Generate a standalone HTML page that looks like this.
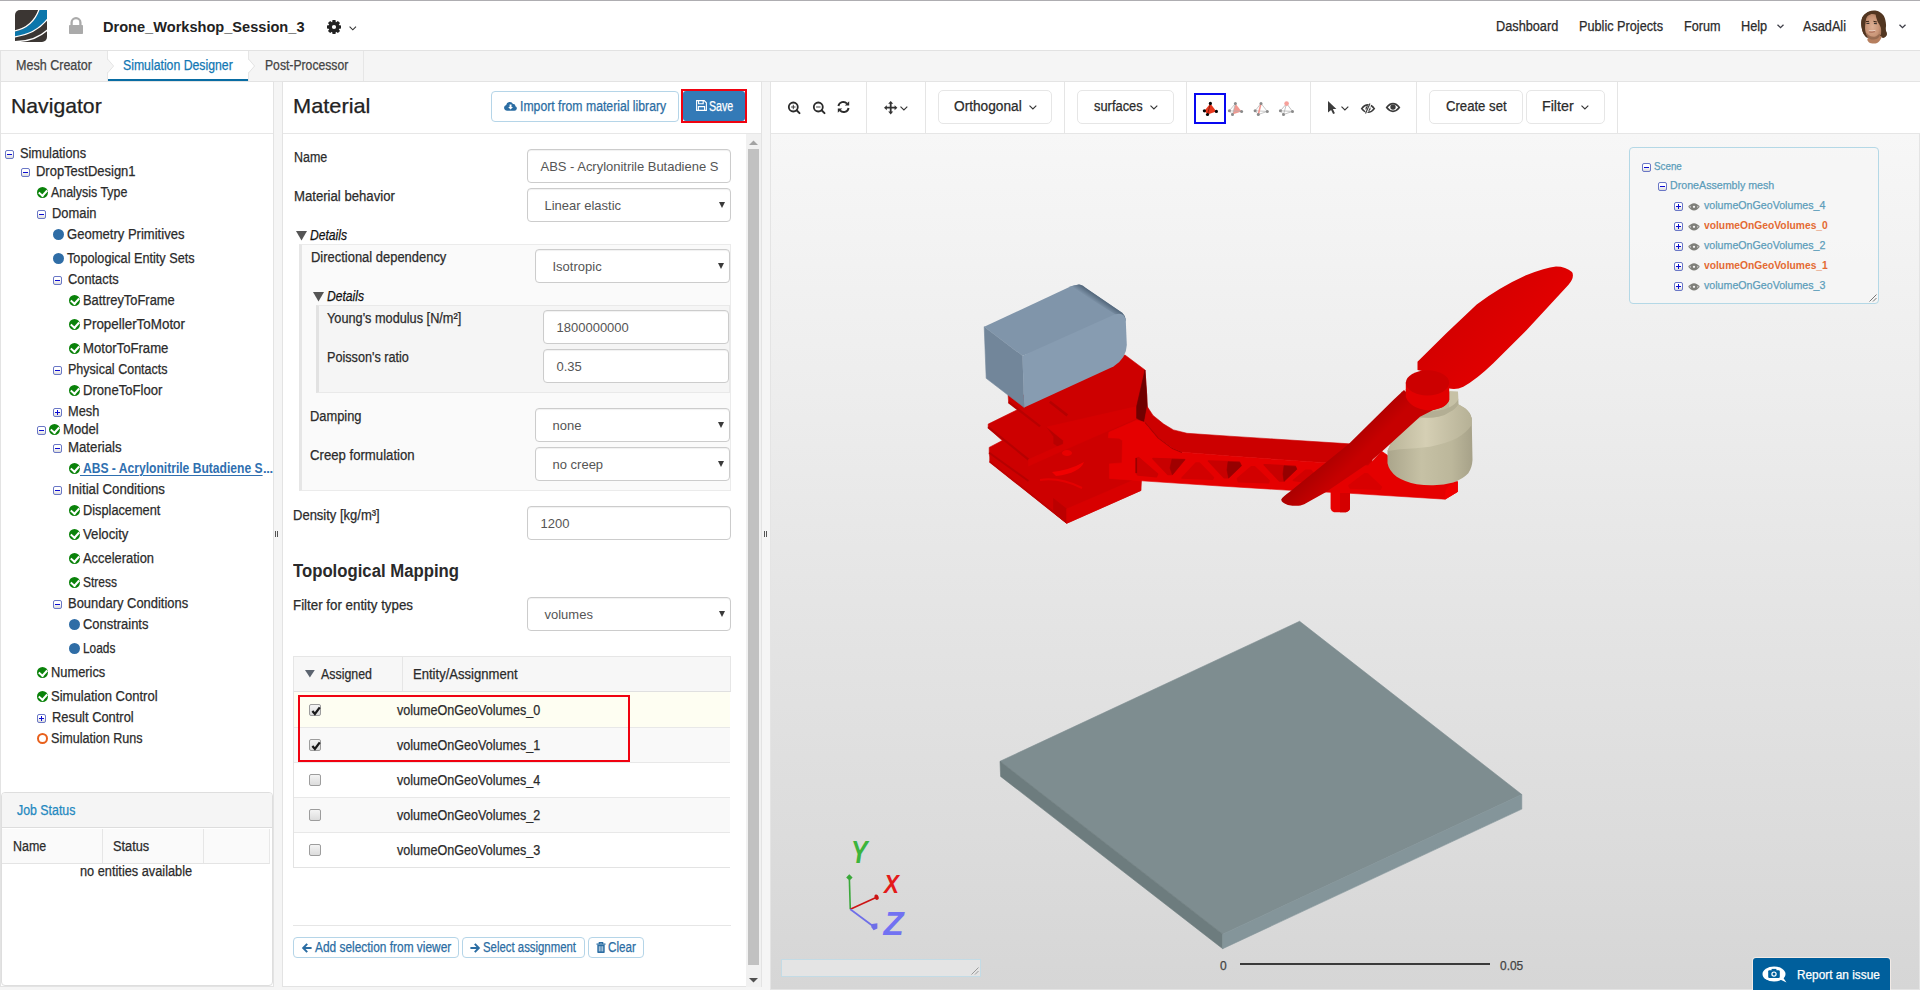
<!DOCTYPE html>
<html><head><meta charset="utf-8"><title>Drone_Workshop_Session_3</title>
<style>
*{box-sizing:border-box}
html,body{margin:0;padding:0}
body{width:1920px;height:990px;overflow:hidden;position:relative;background:#f5f5f5;font:14px/18px "Liberation Sans",sans-serif;color:#2b2b2b}
.a{position:absolute}
.t{position:absolute;white-space:nowrap;transform-origin:0 0;-webkit-text-stroke:0.25px}
svg{position:absolute;overflow:visible}
.ex{position:absolute;width:9px;height:9px;border:1px solid #6a77c6;border-radius:2px;background:linear-gradient(#fff 35%,#dcdcdc)}
.ex i{position:absolute;left:1px;top:2.9px;width:5px;height:1.25px;background:#0c0cd2}
.ex b{position:absolute;left:2.9px;top:1px;width:1.25px;height:5px;background:#0c0cd2}
.ok{position:absolute;width:11px;height:11px;border-radius:50%;background:#0a820a}
.ok:after{content:"";position:absolute;left:3.4px;top:1.2px;width:3.6px;height:6.2px;border:solid #fff;border-width:0 2.1px 2.1px 0;transform:rotate(42deg)}
.bl{position:absolute;width:11px;height:11px;border-radius:50%;background:#2f6da6}
.oc{position:absolute;width:11px;height:11px;border-radius:50%;border:2px solid #e8601c;background:#fff}
.inp{position:absolute;font-size:13px;height:34px;border:1px solid #ccc;border-radius:4px;background:#fff;color:#555;box-shadow:inset 0 1px 1px rgba(0,0,0,.06)}
.inp span{position:absolute;top:8px;line-height:18px;white-space:nowrap}
.inp u{position:absolute;right:5px;top:13px;width:0;height:0;border-left:3.5px solid transparent;border-right:3.5px solid transparent;border-top:6px solid #3a3a3a}
.btn{position:absolute;border:1px solid #b5d5e8;border-radius:4px;background:#fff;color:#2b6da3}
.tbtn{position:absolute;border:1px solid #e6e6e6;border-radius:5px;background:#fff;height:34px}
.vsep{position:absolute;top:82px;width:1px;height:51px;background:#e5e5e5}
.cb{position:absolute;width:12px;height:12px;border:1px solid #9d9d9d;border-radius:2px;background:linear-gradient(#f4f4f4,#dcdcdc)}
</style></head>
<body>
<!-- HEADER -->
<div class="a" style="left:0;top:0;width:1920px;height:51px;background:#fff;border-top:1px solid #aeadb1;border-bottom:1px solid #e2e2e2"></div>
<svg style="left:15px;top:10px" width="32" height="32" viewBox="0 0 32 32">
  <defs><clipPath id="lg"><path d="M5 0H32V27a5 5 0 0 1-5 5H0V5a5 5 0 0 1 5-5z"></path></clipPath></defs>
  <g clip-path="url(#lg)">
    <rect width="32" height="32" fill="#3b3633"></rect>
    <path d="M-1 21.8Q18.3 18 24.9 -1H33V8.2Q20.5 24.2 -1 26.6z" fill="#0b76ab"></path>
    <path d="M-1 21.1Q18 17.3 24.2 -1" fill="none" stroke="#fff" stroke-width="1.3"></path>
    <path d="M-1 27Q20.5 24.6 33 8.6" fill="none" stroke="#fff" stroke-width="1.3"></path>
    <path d="M-1 31.6Q20 31.8 33 19.4" fill="none" stroke="#fff" stroke-width="1.3"></path>
  </g>
</svg>
<svg style="left:69px;top:17px" width="14" height="17" viewBox="0 0 14 17">
  <path d="M2.6 9V5.6a4.4 4.4 0 0 1 8.8 0V9" fill="none" stroke="#aaa" stroke-width="2.3"></path>
  <rect x="0" y="8" width="14" height="9" rx="0.8" fill="#aaa"></rect>
</svg>
<div class="t" style="left: 102.5px; top: 17px; font-weight: bold; -webkit-text-stroke: 0px; font-size: 15px; line-height: 20px; color: rgb(34, 34, 34); transform: scaleX(0.972);">Drone_Workshop_Session_3</div>
<svg style="left:327px;top:20px" width="14" height="14" viewBox="-7 -7 14 14">
  <g fill="#222">
    <path id="gt" d="M-1.5 -7H1.5L1.9 -4.4H-1.9z"></path>
    <use href="#gt" transform="rotate(45)"></use><use href="#gt" transform="rotate(90)"></use><use href="#gt" transform="rotate(135)"></use>
    <use href="#gt" transform="rotate(180)"></use><use href="#gt" transform="rotate(225)"></use><use href="#gt" transform="rotate(270)"></use><use href="#gt" transform="rotate(315)"></use>
  </g>
  <circle r="3.7" fill="none" stroke="#222" stroke-width="3.2"></circle>
</svg>
<svg style="left:349px;top:26px" width="8" height="5" viewBox="0 0 8 5"><path d="M0.6 0.6L3.8 3.8L7 0.6" fill="none" stroke="#333" stroke-width="1.1"></path></svg>

<div class="t" style="left: 1496px; top: 17px; transform: scaleX(0.909);">Dashboard</div>
<div class="t" style="left: 1579px; top: 17px; transform: scaleX(0.907);">Public Projects</div>
<div class="t" style="left: 1683.5px; top: 17px; transform: scaleX(0.902);">Forum</div>
<div class="t" style="left: 1741px; top: 17px; transform: scaleX(0.91);">Help</div>
<svg style="left:1776.5px;top:24px" width="7" height="5" viewBox="0 0 7 5"><path d="M0.5 0.7L3.5 3.7L6.5 0.7" fill="none" stroke="#3c3c46" stroke-width="1.25"></path></svg>
<div class="t" style="left: 1803px; top: 17px; transform: scaleX(0.906);">AsadAli</div>
<svg style="left:1899px;top:24px" width="7" height="5" viewBox="0 0 7 5"><path d="M0.5 0.7L3.5 3.7L6.5 0.7" fill="none" stroke="#3c3c46" stroke-width="1.25"></path></svg>
<!-- avatar -->
<svg style="left:1859px;top:9px" width="30" height="36" viewBox="0 0 30 36"><defs><radialGradient id="fc" cx="45%" cy="50%" r="65%"><stop offset="0" stop-color="#ddb095"></stop><stop offset="0.6" stop-color="#c99577"></stop><stop offset="1" stop-color="#9a6a50"></stop></radialGradient></defs><path d="M9.61 28.64C11.81 27.49 20.27 25.24 22.31 25.48C24.34 25.72 22.52 28.67 21.82 30.09C21.12 31.51 19.72 33.32 18.09 34.02C16.46 34.72 13.52 34.59 12.03 34.31C10.54 34.04 9.52 33.31 9.12 32.37C8.72 31.42 7.41 29.79 9.61 28.64z" fill="#b67f5f"></path><path d="M3.79 23.06C3.31 21.44 2.49 18.45 2.33 16.27C2.17 14.09 2.29 11.75 2.82 9.97C3.34 8.19 4.27 6.86 5.48 5.61C6.69 4.36 8.51 3.14 10.09 2.45C11.67 1.76 13.32 1.48 14.94 1.48C16.56 1.48 18.25 1.68 19.79 2.45C21.32 3.22 23.06 4.67 24.15 6.09C25.24 7.50 25.84 9.24 26.33 10.94C26.81 12.64 27.00 14.57 27.06 16.27C27.12 17.97 26.55 19.66 26.67 21.12C26.79 22.58 27.80 23.93 27.79 25.0C27.77 26.07 27.19 26.90 26.58 27.52C25.97 28.14 24.88 28.83 24.15 28.73C23.42 28.63 23.75 27.08 22.21 26.94C20.68 26.80 17.28 27.63 14.94 27.91C12.60 28.19 9.77 28.96 8.15 28.64C6.53 28.32 5.97 26.90 5.24 25.97C4.51 25.04 4.28 24.68 3.79 23.06z" fill="#523621"></path><path d="M6.31 13.36C6.51 11.10 6.63 9.36 7.42 8.03C8.21 6.70 9.48 5.72 11.06 5.36C12.64 5.00 15.42 4.84 16.88 5.85C18.33 6.86 18.90 9.36 19.79 11.42C20.68 13.48 21.79 16.03 22.21 18.21C22.63 20.39 22.79 22.78 22.31 24.52C21.82 26.26 20.53 27.66 19.3 28.64C18.07 29.62 16.31 30.21 14.94 30.43C13.57 30.65 12.19 30.53 11.06 29.95C9.93 29.37 8.96 28.33 8.15 26.94C7.34 25.55 6.52 23.87 6.21 21.61C5.90 19.35 6.11 15.62 6.31 13.36z" fill="url(#fc)"></path><path d="M7.18 24.03C7.67 24.03 9.61 26.33 11.06 26.94C12.52 27.55 14.29 27.99 15.91 27.67C17.53 27.35 20.20 24.84 20.76 25.0C21.33 25.16 20.27 27.73 19.3 28.64C18.33 29.55 16.31 30.21 14.94 30.43C13.57 30.65 12.19 30.53 11.06 29.95C9.93 29.37 8.80 27.93 8.15 26.94C7.50 25.95 6.69 24.03 7.18 24.03z" fill="#8d6349" opacity="0.75"></path><path d="M16.88 5.7C17.32 5.09 19.95 7.48 21.24 8.76C22.53 10.04 23.75 11.46 24.64 13.36C25.53 15.26 26.05 18.21 26.58 20.15C27.10 22.09 27.83 23.72 27.79 25.0C27.75 26.28 26.98 27.19 26.33 27.81C25.68 28.43 24.58 28.88 23.91 28.73C23.24 28.59 22.59 28.37 22.31 26.94C22.03 25.51 22.51 22.01 22.21 20.15C21.91 18.29 21.12 17.08 20.52 15.79C19.91 14.50 19.19 14.07 18.58 12.39C17.97 10.71 16.44 6.31 16.88 5.7z" fill="#523621"></path><path d="M2.82 9.97C3.34 8.19 4.27 6.82 5.48 5.61C6.69 4.40 8.51 3.19 10.09 2.7C11.67 2.22 14.62 2.30 14.94 2.7C15.26 3.10 13.16 4.31 12.03 5.12C10.90 5.93 9.08 6.34 8.15 7.55C7.22 8.76 6.81 10.61 6.45 12.39C6.09 14.17 6.17 16.19 5.97 18.21C5.77 20.23 5.60 23.71 5.24 24.52C4.88 25.33 4.28 24.43 3.79 23.06C3.31 21.68 2.49 18.45 2.33 16.27C2.17 14.09 2.29 11.75 2.82 9.97z" fill="#523621"></path><path d="M6.94 12.64L10.09 12.3" stroke="#3a2515" stroke-width="1"></path><path d="M14.45 12.3L17.85 12.98" stroke="#3a2515" stroke-width="1"></path><path d="M7.42 14.48L10.33 14.33" stroke="#3d3530" stroke-width="1.2"></path><path d="M14.94 14.33L17.85 14.58" stroke="#3d3530" stroke-width="1.2"></path><path d="M9.85 21.7Q13.0 22.09 16.39 21.36" stroke="#ecd3c6" stroke-width="0.9" fill="none"></path><path d="M10.09 22.96Q13.0 23.55 15.91 22.67" stroke="#a2604c" stroke-width="0.9" fill="none"></path></svg>

<!-- TAB BAR -->
<div class="a" style="left:0;top:51px;width:1920px;height:31px;background:#f5f5f5;border-bottom:1px solid #e5e5e5"></div>
<div class="a" style="left:0;top:51px;width:1px;height:30px;background:#e2e2e2"></div>
<div class="a" style="left:108px;top:51px;width:140px;height:30px;background:#fff;border-bottom:2px solid #086ca3"></div>
<div class="a" style="left:107px;top:51px;width:1px;height:30px;background:#e6e6e6"></div>
<div class="a" style="left:248px;top:51px;width:1px;height:30px;background:#e6e6e6"></div>
<div class="a" style="left:363px;top:51px;width:1px;height:30px;background:#e6e6e6"></div>
<svg style="left:107px;top:58px" width="8" height="16" viewBox="0 0 8 16"><path d="M0 1L6.3 8L0 15z" fill="#f5f5f5"></path><path d="M0.5 1L6.6 8L0.5 15" fill="none" stroke="#e4e4e4" stroke-width="1"></path></svg>
<svg style="left:248px;top:58px" width="8" height="16" viewBox="0 0 8 16"><path d="M0 1L6.3 8L0 15z" fill="#fff"></path><path d="M0.5 1L6.6 8L0.5 15" fill="none" stroke="#e4e4e4" stroke-width="1"></path></svg>
<div class="t" style="left: 16px; top: 56px; color: rgb(68, 68, 68); transform: scaleX(0.896);">Mesh Creator</div>
<div class="t" style="left: 123.3px; top: 56px; color: rgb(17, 119, 179); transform: scaleX(0.876);">Simulation Designer</div>
<div class="t" style="left: 264.5px; top: 56px; color: rgb(68, 68, 68); transform: scaleX(0.87);">Post-Processor</div>
<!-- NAVIGATOR PANEL -->
<div class="a" style="left:0px;top:81px;width:274px;height:906px;background:#fff;border:1px solid #e3e3e3"></div>
<div class="a" style="left:1px;top:133px;width:272px;height:1px;background:#e7e7e7"></div>
<div class="t" style="left: 11px; top: 93px; font-size: 21px; line-height: 26px; color: rgb(34, 34, 34); transform: scaleX(1.009);">Navigator</div>
<div class="ex" style="left:5px;top:150px"><i></i></div>
<div class="t" style="left: 19.7px; top: 144px; transform: scaleX(0.913);">Simulations</div>
<div class="ex" style="left:21px;top:168px"><i></i></div>
<div class="t" style="left: 35.7px; top: 162px; transform: scaleX(0.927);">DropTestDesign1</div>
<div class="ok" style="left:37px;top:187px"></div>
<div class="t" style="left: 51px; top: 183px; transform: scaleX(0.887);">Analysis Type</div>
<div class="ex" style="left:37px;top:210px"><i></i></div>
<div class="t" style="left: 51.7px; top: 204px; transform: scaleX(0.922);">Domain</div>
<div class="bl" style="left:53px;top:229px"></div>
<div class="t" style="left: 67px; top: 225px; transform: scaleX(0.932);">Geometry Primitives</div>
<div class="bl" style="left:53px;top:253px"></div>
<div class="t" style="left: 67px; top: 249px; transform: scaleX(0.906);">Topological Entity Sets</div>
<div class="ex" style="left:53px;top:276px"><i></i></div>
<div class="t" style="left: 67.7px; top: 270px; transform: scaleX(0.916);">Contacts</div>
<div class="ok" style="left:69px;top:295px"></div>
<div class="t" style="left: 83px; top: 291px; transform: scaleX(0.921);">BattreyToFrame</div>
<div class="ok" style="left:69px;top:319px"></div>
<div class="t" style="left: 83px; top: 315px; transform: scaleX(0.957);">PropellerToMotor</div>
<div class="ok" style="left:69px;top:343px"></div>
<div class="t" style="left: 83px; top: 339px; transform: scaleX(0.938);">MotorToFrame</div>
<div class="ex" style="left:53px;top:366px"><i></i></div>
<div class="t" style="left: 67.7px; top: 360px; transform: scaleX(0.895);">Physical Contacts</div>
<div class="ok" style="left:69px;top:385px"></div>
<div class="t" style="left: 83px; top: 381px; transform: scaleX(0.936);">DroneToFloor</div>
<div class="ex" style="left:53px;top:408px"><i></i><b></b></div>
<div class="t" style="left: 67.7px; top: 402px; transform: scaleX(0.914);">Mesh</div>
<div class="ex" style="left:37px;top:426px"><i></i></div>
<div class="ok" style="left:49px;top:424px"></div>
<div class="t" style="left: 63.2px; top: 420px; transform: scaleX(0.936);">Model</div>
<div class="ex" style="left:53px;top:444px"><i></i></div>
<div class="t" style="left: 67.7px; top: 438px; transform: scaleX(0.944);">Materials</div>
<div class="ok" style="left:69px;top:463px"></div>
<div class="a" style="left:80px;top:459px;width:183px;height:18px;overflow:hidden;font-weight:bold;color:#2f6fb0"><span class="t" style="left: 0px; top: 0px; -webkit-text-stroke: 0px; text-decoration: underline 1px; text-underline-offset: 2px; white-space: pre; transform: scaleX(0.864);"> ABS - Acrylonitrile Butadiene S</span></div>
<div class="t" style="left:263px;top:460px;font-size:13px;font-weight:bold;-webkit-text-stroke:0;color:#2f6fb0;letter-spacing:-0.3px">...</div>
<div class="ex" style="left:53px;top:486px"><i></i></div>
<div class="t" style="left: 67.7px; top: 480px; transform: scaleX(0.944);">Initial Conditions</div>
<div class="ok" style="left:69px;top:505px"></div>
<div class="t" style="left: 83px; top: 501px; transform: scaleX(0.912);">Displacement</div>
<div class="ok" style="left:69px;top:529px"></div>
<div class="t" style="left: 83px; top: 525px; transform: scaleX(0.941);">Velocity</div>
<div class="ok" style="left:69px;top:553px"></div>
<div class="t" style="left: 83px; top: 549px; transform: scaleX(0.922);">Acceleration</div>
<div class="ok" style="left:69px;top:577px"></div>
<div class="t" style="left: 83px; top: 573px; transform: scaleX(0.857);">Stress</div>
<div class="ex" style="left:53px;top:600px"><i></i></div>
<div class="t" style="left: 67.7px; top: 594px; transform: scaleX(0.925);">Boundary Conditions</div>
<div class="bl" style="left:69px;top:619px"></div>
<div class="t" style="left: 83px; top: 615px; transform: scaleX(0.924);">Constraints</div>
<div class="bl" style="left:69px;top:643px"></div>
<div class="t" style="left: 83px; top: 639px; transform: scaleX(0.849);">Loads</div>
<div class="ok" style="left:37px;top:667px"></div>
<div class="t" style="left: 51px; top: 663px; transform: scaleX(0.918);">Numerics</div>
<div class="ok" style="left:37px;top:691px"></div>
<div class="t" style="left: 51px; top: 687px; transform: scaleX(0.932);">Simulation Control</div>
<div class="ex" style="left:37px;top:714px"><i></i><b></b></div>
<div class="t" style="left: 51.7px; top: 708px; transform: scaleX(0.921);">Result Control</div>
<div class="oc" style="left:37px;top:733px"></div>
<div class="t" style="left: 51px; top: 729px; transform: scaleX(0.899);">Simulation Runs</div>
<!-- JOB STATUS -->
<div class="a" style="left:1px;top:792px;width:272px;height:194px;background:#fff;border:1px solid #dedede;border-radius:4px"></div>
<div class="a" style="left:2px;top:793px;width:270px;height:35px;background:#f5f5f5;border-bottom:1px solid #dddddd;border-radius:3px 3px 0 0"></div>
<div class="t" style="left: 17.4px; top: 801px; color: rgb(36, 136, 192); transform: scaleX(0.883);">Job Status</div>
<div class="a" style="left:2px;top:829px;width:268px;height:35px;background:#fafafa;border-bottom:1px solid #e4e4e4;border-right:1px solid #e8e8e8"></div>
<div class="a" style="left:102px;top:829px;width:1px;height:34px;background:#e6e6e6"></div>
<div class="a" style="left:203px;top:829px;width:1px;height:34px;background:#e6e6e6"></div>
<div class="t" style="left: 13.3px; top: 837px; transform: scaleX(0.889);">Name</div>
<div class="t" style="left: 113px; top: 837px; transform: scaleX(0.912);">Status</div>
<div class="t" style="left: 79.6px; top: 862px; transform: scaleX(0.912);">no entities available</div>
<div class="a" style="left:275px;top:531px;width:1px;height:6px;background:#555"></div><div class="a" style="left:277px;top:531px;width:1px;height:6px;background:#555"></div>
<!-- MATERIAL PANEL -->
<div class="a" style="left:282px;top:81px;width:480px;height:906px;background:#fff;border:1px solid #e3e3e3"></div>
<div class="a" style="left:283px;top:133px;width:478px;height:1px;background:#e7e7e7"></div>
<div class="t" style="left: 293.3px; top: 93px; font-size: 21px; line-height: 26px; color: rgb(34, 34, 34); transform: scaleX(1.037);">Material</div>
<!-- import button -->
<div class="btn" style="left:491px;top:91px;width:188px;height:31px"></div>
<svg style="left:504px;top:101px" width="13" height="10" viewBox="0 0 13 10"><path d="M3 9.8A2.9 2.9 0 0 1 2.2 4.1A3.6 3.6 0 0 1 9 2.9A2.2 2.2 0 0 1 11.4 5.2A2.4 2.4 0 0 1 10.5 9.8z" fill="#2b6da3"></path><path d="M5.6 3.6h1.9v2.3h1.5L6.55 8.4L4.1 5.9h1.5z" fill="#fff"></path></svg>
<div class="t" style="left: 520px; top: 97px; color: rgb(43, 109, 163); transform: scaleX(0.874);">Import from material library</div>
<!-- save button -->
<div class="a" style="left:681px;top:89px;width:66px;height:34px;border:2px solid #f00210"></div>
<div class="a" style="left:683px;top:91px;width:62px;height:30px;background:#337ab7;border-radius:3px"></div>
<svg style="left:696px;top:100px" width="11" height="11" viewBox="0 0 11 11"><path d="M0.6 0.6H8.2L10.4 2.8V10.4H0.6z" fill="none" stroke="#fff" stroke-width="1.1"></path><path d="M2.6 0.8V3.8H7.2V0.8M2.4 10.2V6.6H8.6V10.2" fill="none" stroke="#fff" stroke-width="1.1"></path></svg>
<div class="t" style="left: 709px; top: 97px; color: rgb(255, 255, 255); transform: scaleX(0.761);">Save</div>

<!-- scrollbar -->
<div class="a" style="left:746px;top:134px;width:15px;height:853px;background:#f1f1f1"></div>
<div class="a" style="left:748px;top:149px;width:11px;height:816px;background:#c1c1c1"></div>
<svg style="left:749px;top:140px" width="9" height="5" viewBox="0 0 9 5"><path d="M0 5L4.5 0.5L9 5z" fill="#a3a3a3"></path></svg>
<svg style="left:749px;top:978px" width="9" height="5" viewBox="0 0 9 5"><path d="M0 0L4.5 4.5L9 0z" fill="#505050"></path></svg>

<!-- form -->
<div class="t" style="left: 293.7px; top: 148px; transform: scaleX(0.891);">Name</div>
<div class="inp" style="left:527px;top:149px;width:204px"><span style="left: 12.5px; letter-spacing: -0.02px;">ABS - Acrylonitrile Butadiene S</span></div>
<div class="t" style="left: 293.7px; top: 187px; transform: scaleX(0.939);">Material behavior</div>
<div class="inp" style="left:527px;top:188px;width:204px"><span style="left:16.5px">Linear elastic</span><u></u></div>

<svg style="left:296px;top:231px" width="11" height="10" viewBox="0 0 11 10"><path d="M0 0H11L5.5 9.6z" fill="#555"></path></svg>
<div class="t" style="left: 309.7px; top: 226px; font-style: italic; color: rgb(17, 17, 17); transform: scaleX(0.865);">Details</div>
<div class="a" style="left:299px;top:244px;width:432px;height:247px;background:#fafafa;border:1px solid #ebebeb;border-left:3px solid #e6e6e6"></div>
<div class="t" style="left: 310.5px; top: 248px; transform: scaleX(0.925);">Directional dependency</div>
<div class="inp" style="left:535px;top:249px;width:195px"><span style="left:16.5px">Isotropic</span><u></u></div>

<svg style="left:313px;top:292px" width="11" height="10" viewBox="0 0 11 10"><path d="M0 0H11L5.5 9.6z" fill="#555"></path></svg>
<div class="t" style="left: 326.7px; top: 287px; font-style: italic; color: rgb(17, 17, 17); transform: scaleX(0.865);">Details</div>
<div class="a" style="left:316px;top:305px;width:414px;height:88px;background:#f5f5f5;border:1px solid #e9e9e9;border-left:3px solid #e2e2e2"></div>
<div class="t" style="left: 327px; top: 309px; transform: scaleX(0.909);">Young's modulus [N/m²]</div>
<div class="inp" style="left:543px;top:310px;width:186px"><span style="left:12.5px">1800000000</span></div>
<div class="t" style="left: 327px; top: 348px; transform: scaleX(0.904);">Poisson's ratio</div>
<div class="inp" style="left:543px;top:349px;width:186px"><span style="left:12.5px">0.35</span></div>

<div class="t" style="left: 310.2px; top: 407px; transform: scaleX(0.919);">Damping</div>
<div class="inp" style="left:535px;top:408px;width:195px"><span style="left:16.5px">none</span><u></u></div>
<div class="t" style="left: 310.2px; top: 446px; transform: scaleX(0.94);">Creep formulation</div>
<div class="inp" style="left:535px;top:447px;width:195px"><span style="left:16.5px">no creep</span><u></u></div>

<div class="t" style="left: 293.3px; top: 506px; transform: scaleX(0.929);">Density [kg/m³]</div>
<div class="inp" style="left:527px;top:506px;width:204px"><span style="left:12.5px">1200</span></div>

<div class="t" style="left: 293.3px; top: 560px; font-size: 18px; line-height: 22px; font-weight: bold; -webkit-text-stroke: 0px; color: rgb(42, 42, 42); transform: scaleX(0.929);">Topological Mapping</div>
<div class="t" style="left: 293.3px; top: 596px; transform: scaleX(0.952);">Filter for entity types</div>
<div class="inp" style="left:527px;top:597px;width:204px"><span style="left:16.5px">volumes</span><u></u></div>

<!-- table -->
<div class="a" style="left:293px;top:656px;width:438px;height:36px;background:#f7f7f7;border:1px solid #e6e6e6;border-bottom:1px solid #e0e0e0"></div>
<div class="a" style="left:402px;top:657px;width:1px;height:34px;background:#e6e6e6"></div>
<svg style="left:304.5px;top:670px" width="10" height="8" viewBox="0 0 10 8"><path d="M0 0H9.8L4.9 7.4z" fill="#5c6470"></path></svg>
<div class="t" style="left: 321.3px; top: 665px; transform: scaleX(0.884);">Assigned</div>
<div class="t" style="left: 413.3px; top: 665px; transform: scaleX(0.933);">Entity/Assignment</div>
<div class="a" style="left:293px;top:692px;width:1px;height:176px;background:#e3e3e3"></div>
<div class="a" style="left:294px;top:692px;width:436px;height:36px;background:#fefef2;border-bottom:1px solid #e8e8e8"></div>
<div class="a" style="left:294px;top:728px;width:436px;height:35px;background:#f9f9f9;border-bottom:1px solid #e8e8e8"></div>
<div class="a" style="left:294px;top:763px;width:436px;height:35px;background:#fff;border-bottom:1px solid #e8e8e8"></div>
<div class="a" style="left:294px;top:798px;width:436px;height:35px;background:#f9f9f9;border-bottom:1px solid #e8e8e8"></div>
<div class="a" style="left:294px;top:833px;width:436px;height:35px;background:#fff;border-bottom:1px solid #e3e3e3"></div>
<div class="a" style="left:298px;top:695px;width:332px;height:67px;border:2px solid #f00210"></div>
<div class="cb" style="left:309px;top:704px"><svg style="left:0.5px;top:0.5px" width="10" height="10" viewBox="0 0 10 10"><path d="M1.4 5L3.9 7.9L8.8 1.4" fill="none" stroke="#1a1a1a" stroke-width="2.3"></path></svg></div>
<div class="t" style="left: 396.7px; top: 701px; transform: scaleX(0.898);">volumeOnGeoVolumes_0</div>
<div class="cb" style="left:309px;top:739px"><svg style="left:0.5px;top:0.5px" width="10" height="10" viewBox="0 0 10 10"><path d="M1.4 5L3.9 7.9L8.8 1.4" fill="none" stroke="#1a1a1a" stroke-width="2.3"></path></svg></div>
<div class="t" style="left: 396.7px; top: 736px; transform: scaleX(0.898);">volumeOnGeoVolumes_1</div>
<div class="cb" style="left:309px;top:774px"></div>
<div class="t" style="left: 396.7px; top: 771px; transform: scaleX(0.898);">volumeOnGeoVolumes_4</div>
<div class="cb" style="left:309px;top:809px"></div>
<div class="t" style="left: 396.7px; top: 806px; transform: scaleX(0.898);">volumeOnGeoVolumes_2</div>
<div class="cb" style="left:309px;top:844px"></div>
<div class="t" style="left: 396.7px; top: 841px; transform: scaleX(0.898);">volumeOnGeoVolumes_3</div>
<div class="a" style="left:293px;top:925px;width:438px;height:1px;background:#e6e6e6"></div>
<div class="btn" style="left:293px;top:937px;width:166px;height:21px"></div>
<svg style="left:301.5px;top:942.5px" width="10" height="10" viewBox="0 0 10 10"><path d="M9.6 5H1.6M5.2 0.9L1.2 5L5.2 9.1" fill="none" stroke="#2b6da3" stroke-width="2"></path></svg>
<div class="t" style="left: 314.6px; top: 938px; color: rgb(43, 109, 163); transform: scaleX(0.85);">Add selection from viewer</div>
<div class="btn" style="left:462px;top:937px;width:123px;height:21px"></div>
<svg style="left:470px;top:942.5px" width="10" height="10" viewBox="0 0 10 10"><path d="M0.4 5H8.4M4.8 0.9L8.8 5L4.8 9.1" fill="none" stroke="#2b6da3" stroke-width="2"></path></svg>
<div class="t" style="left: 483.3px; top: 938px; color: rgb(43, 109, 163); transform: scaleX(0.813);">Select assignment</div>
<div class="btn" style="left:588px;top:937px;width:56px;height:21px"></div>
<svg style="left:596px;top:942px" width="10" height="11" viewBox="0 0 10 11"><path d="M0.5 2.2h9M3.3 2V0.7h3.4V2" fill="none" stroke="#2b6da3" stroke-width="1.2"></path><path d="M1.3 3h7.4v7.2a0.7 0.7 0 0 1-.7.7h-6a0.7 0.7 0 0 1-.7-.7z" fill="#2b6da3"></path><path d="M3.3 4.2v5.2M5 4.2v5.2M6.7 4.2v5.2" stroke="#fff" stroke-width="0.7"></path></svg>
<div class="t" style="left: 607.8px; top: 938px; color: rgb(43, 109, 163); transform: scaleX(0.834);">Clear</div>
<div class="a" style="left:764px;top:531px;width:1px;height:6px;background:#555"></div><div class="a" style="left:766px;top:531px;width:1px;height:6px;background:#555"></div>
<!-- VIEWER PANEL + TOOLBAR -->
<div class="a" style="left:770px;top:81px;width:1150px;height:909px;background:#f2f2f2;border:1px solid #e4e4e4"></div>
<div class="a" style="left:771px;top:82px;width:1149px;height:51px;background:#fff"></div>
<div class="a" style="left:771px;top:133px;width:1149px;height:1px;background:#e6e6e6"></div>
<div class="vsep" style="left:866px"></div><div class="vsep" style="left:925px"></div><div class="vsep" style="left:1064px"></div>
<div class="vsep" style="left:1186px"></div><div class="vsep" style="left:1310px"></div><div class="vsep" style="left:1416px"></div><div class="vsep" style="left:1617px"></div>
<!-- zoom in -->
<svg style="left:787px;top:101px" width="15" height="14" viewBox="0 0 15 14"><circle cx="6.3" cy="6" r="4.5" fill="none" stroke="#2b2b2b" stroke-width="1.8"></circle><path d="M9.6 9.3L12.5 12.1" stroke="#2b2b2b" stroke-width="2" stroke-linecap="round"></path><path d="M4.1 6h4.4M6.3 3.8v4.4" stroke="#2b2b2b" stroke-width="0.9"></path></svg>
<!-- zoom out -->
<svg style="left:812px;top:101px" width="15" height="14" viewBox="0 0 15 14"><circle cx="6.3" cy="6" r="4.5" fill="none" stroke="#2b2b2b" stroke-width="1.8"></circle><path d="M9.6 9.3L12.5 12.1" stroke="#2b2b2b" stroke-width="2" stroke-linecap="round"></path><path d="M4.1 6h4.4" stroke="#2b2b2b" stroke-width="0.9"></path></svg>
<!-- refresh -->
<svg style="left:837px;top:101px" width="13" height="12" viewBox="0 0 13 12"><path d="M1.4 5A5 5 0 0 1 10 2.6" fill="none" stroke="#2b2b2b" stroke-width="1.9"></path><path d="M11.6 7A5 5 0 0 1 3 9.4" fill="none" stroke="#2b2b2b" stroke-width="1.9"></path><path d="M12.2 0.2V4.6H7.8z" fill="#2b2b2b"></path><path d="M0.8 11.8V7.4H5.2z" fill="#2b2b2b"></path></svg>
<!-- move -->
<svg style="left:883.5px;top:100.7px" width="13.4" height="13.4" viewBox="-6.7 -6.7 13.4 13.4"><path d="M0-6.7L2.5-3.9H0.9V-0.9H3.9V-2.5L6.7 0L3.9 2.5V0.9H0.9V3.9H2.5L0 6.7L-2.5 3.9H-0.9V0.9H-3.9V2.5L-6.7 0L-3.9-2.5V-0.9H-0.9V-3.9H-2.5z" fill="#333"></path></svg>
<svg style="left:900px;top:106px" width="8" height="5" viewBox="0 0 8 5"><path d="M0.5 0.6L3.9 4L7.3 0.6" fill="none" stroke="#333" stroke-width="1.1"></path></svg>
<!-- Orthogonal -->
<div class="tbtn" style="left:938px;top:90px;width:114px"></div>
<div class="t" style="left: 954px; top: 96px; font-size: 14px; line-height: 20px; transform: scaleX(0.977);">Orthogonal</div>
<svg style="left:1028.5px;top:105px" width="8" height="5" viewBox="0 0 8 5"><path d="M0.5 0.6L3.9 4L7.3 0.6" fill="none" stroke="#333" stroke-width="1.1"></path></svg>
<!-- surfaces -->
<div class="tbtn" style="left:1077px;top:90px;width:97px"></div>
<div class="t" style="left: 1094px; top: 96px; font-size: 14px; line-height: 20px; transform: scaleX(0.92);">surfaces</div>
<svg style="left:1150px;top:105px" width="8" height="5" viewBox="0 0 8 5"><path d="M0.5 0.6L3.9 4L7.3 0.6" fill="none" stroke="#333" stroke-width="1.1"></path></svg>
<!-- tetra icons -->
<div class="a" style="left:1194px;top:93px;width:32px;height:31px;border:2px solid #0808f0"></div>
<svg style="left:1200px;top:100px" width="100" height="18" viewBox="1200 100 100 18">
  <g>
    <path d="M1210.4 103.4L1204.4 110.8L1207.5 114.5L1216.4 111.4z" fill="#e8381e"></path>
    <path d="M1210.4 103.4L1207.5 114.5" stroke="#7a1408" stroke-width="0.8"></path>
    <g fill="#050505"><circle cx="1210.4" cy="103.4" r="1.6"></circle><circle cx="1204.4" cy="110.8" r="1.6"></circle><circle cx="1207.5" cy="114.5" r="1.6"></circle><circle cx="1216.4" cy="111.4" r="1.6"></circle></g>
  </g>
  <g>
    <path d="M1235.4 103.4L1232.5 114.5L1241.6 111.4z" fill="#f29890"></path>
    <path d="M1235.4 103.4L1229.4 110.8L1232.5 114.5M1229.4 110.8L1241.6 111.4M1235.4 103.4L1232.5 114.5" stroke="#b0b0b0" stroke-width="0.7" fill="none"></path>
    <g fill="#8a8a8a"><circle cx="1235.4" cy="103.4" r="1.5"></circle><circle cx="1229.4" cy="110.8" r="1.5"></circle><circle cx="1232.5" cy="114.5" r="1.5"></circle><circle cx="1241.6" cy="111.4" r="1.5"></circle></g>
  </g>
  <g>
    <path d="M1261 103.4L1255.1 110.8L1258.3 114.5L1267.3 111.4zM1255.1 110.8L1267.3 111.4" stroke="#b0b0b0" stroke-width="0.7" fill="none"></path>
    <path d="M1261 103.4L1258.3 114.5" stroke="#f29890" stroke-width="1.6"></path>
    <g fill="#8a8a8a"><circle cx="1261" cy="103.4" r="1.5"></circle><circle cx="1255.1" cy="110.8" r="1.5"></circle><circle cx="1258.3" cy="114.5" r="1.5"></circle><circle cx="1267.3" cy="111.4" r="1.5"></circle></g>
  </g>
  <g>
    <path d="M1286.6 103.6L1280.4 110.8L1283.5 114.5L1292.5 111.4zM1280.4 110.8L1292.5 111.4M1286.6 103.6L1283.5 114.5" stroke="#a8a8a8" stroke-width="0.7" fill="none"></path>
    <circle cx="1286.6" cy="103.6" r="2.3" fill="#f6a09a"></circle>
    <g fill="#8a8a8a"><circle cx="1280.4" cy="110.8" r="1.5"></circle><circle cx="1283.5" cy="114.5" r="1.5"></circle><circle cx="1292.5" cy="111.4" r="1.5"></circle></g>
  </g>
</svg>
<!-- pointer -->
<svg style="left:1328px;top:101px" width="9" height="13" viewBox="0 0 9 13"><path d="M0 0L8.4 8.1H4.9L6.9 12.2L5.1 13L3.1 8.9L0 11.4z" fill="#3c3c3c"></path></svg>
<svg style="left:1340.5px;top:106px" width="8" height="5" viewBox="0 0 8 5"><path d="M0.5 0.6L3.9 4L7.3 0.6" fill="none" stroke="#333" stroke-width="1.1"></path></svg>
<!-- eye-slash -->
<svg style="left:1360.5px;top:102.5px" width="14" height="11" viewBox="0 0 14 11"><path d="M0.7 5.6Q3.4 1.9 7 1.9Q10.6 1.9 13.3 5.6Q10.6 9.3 7 9.3Q3.4 9.3 0.7 5.6z" fill="none" stroke="#3c3c3c" stroke-width="1.6"></path><circle cx="7" cy="5.4" r="2.5" fill="#3c3c3c"></circle><path d="M9.6 0.2L4.6 10.8" stroke="#fff" stroke-width="2.4"></path><path d="M9 0.5L4.5 10.5" stroke="#3c3c3c" stroke-width="1.1"></path></svg>
<!-- eye -->
<svg style="left:1386px;top:103px" width="14" height="9" viewBox="0 0 14 9"><path d="M0.7 4.6Q3.4 0.7 7 0.7Q10.6 0.7 13.3 4.6Q10.6 8.3 7 8.3Q3.4 8.3 0.7 4.6z" fill="none" stroke="#3c3c3c" stroke-width="1.7"></path><circle cx="7" cy="4.1" r="2.7" fill="#3c3c3c"></circle></svg>
<!-- Create set / Filter -->
<div class="tbtn" style="left:1429px;top:90px;width:94px"></div>
<div class="t" style="left: 1445.7px; top: 96px; font-size: 14px; line-height: 20px; transform: scaleX(0.938);">Create set</div>
<div class="tbtn" style="left:1526px;top:90px;width:79px"></div>
<div class="t" style="left: 1542.3px; top: 96px; font-size: 14px; line-height: 20px; transform: scaleX(1.018);">Filter</div>
<svg style="left:1581px;top:105px" width="8" height="5" viewBox="0 0 8 5"><path d="M0.5 0.6L3.9 4L7.3 0.6" fill="none" stroke="#333" stroke-width="1.1"></path></svg>
<!-- 3D SCENE -->
<div class="a" style="left:771px;top:134px;width:1148px;height:855px;background:linear-gradient(#f7f7f7,#d6d6d6)"></div>
<svg style="left:772px;top:134px" width="1148" height="854" viewBox="772 134 1148 854">
<defs>
<linearGradient id="bl1" gradientUnits="userSpaceOnUse" x1="1296" y1="452" x2="1330" y2="486"><stop offset="0" stop-color="#e40000"></stop><stop offset="0.45" stop-color="#a80000"></stop><stop offset="1" stop-color="#c60000"></stop></linearGradient>
<linearGradient id="bl2" gradientUnits="userSpaceOnUse" x1="1470" y1="300" x2="1520" y2="345"><stop offset="0" stop-color="#d40000"></stop><stop offset="1" stop-color="#e20000"></stop></linearGradient>
<linearGradient id="mot" gradientUnits="userSpaceOnUse" x1="1387" y1="0" x2="1473" y2="0"><stop offset="0" stop-color="#aaa58b"></stop><stop offset="0.4" stop-color="#c6c1a5"></stop><stop offset="0.75" stop-color="#bcb79b"></stop><stop offset="1" stop-color="#a6a188"></stop></linearGradient>
<linearGradient id="mot2" gradientUnits="userSpaceOnUse" x1="1387" y1="0" x2="1473" y2="0"><stop offset="0" stop-color="#b9b498"></stop><stop offset="0.45" stop-color="#d5cfb4"></stop><stop offset="1" stop-color="#b5b095"></stop></linearGradient>
<linearGradient id="bedge" gradientUnits="userSpaceOnUse" x1="1093" y1="301.3" x2="1096.6" y2="296"><stop offset="0" stop-color="#8196ab"></stop><stop offset="1" stop-color="#566a7e"></stop></linearGradient>
</defs>
<polygon points="1299.6,621.3 1521.8,794.5 1222.7,934.2 1000,761.3" fill="#7e8d90" stroke="#7e8d90" stroke-width="0.6"></polygon>
<polygon points="1000,761.3 1222.7,934.2 1222.7,948.7 1000.6,776.4" fill="#6d7c7e" stroke="#6d7c7e" stroke-width="0.6"></polygon>
<polygon points="1222.7,934.2 1521.8,794.5 1521.8,809.1 1222.7,948.7" fill="#84959a" stroke="#84959a" stroke-width="0.6"></polygon>
<polygon points="1008.1,395 1008.6,402.3 1017.8,409.5 988.2,424.1 988.2,428 1002.3,440.6 989.2,447.4 989.2,453.2 989.7,457 989.7,461.9 1066.7,523.3 1140.8,490.5 1141.4,480.8 1147,424 1147.2,406.6 1146.7,395 1145,370 1125,355 1110,360 1030,395" fill="#cd0000" stroke="#cd0000" stroke-width="0.6"></polygon>
<path d="M988.2,427.2L1028.5,459.6" fill="none" stroke="#b60000" stroke-width="2.2"></path>
<path d="M989.2,452.8L1028.5,481" fill="none" stroke="#b60000" stroke-width="2"></path>
<path d="M989.7,461.5L1066.7,522.5" fill="none" stroke="#c00000" stroke-width="2"></path>
<path d="M1008.6,402L1040.1,426.4" fill="none" stroke="#b80000" stroke-width="2.4"></path>
<path d="M1049.8,401.8L1067.3,415.4" fill="none" stroke="#b60000" stroke-width="2.6"></path>
<polygon points="1046.9,427 1063.4,440.6 1063.4,450.3 1053.7,443.5 1053.7,436.7" fill="#b80000" stroke="#b80000" stroke-width="0.6"></polygon>
<polygon points="1028.5,459.6 1063.4,444 1063.4,440.6 1046.9,427 1136.6,406.6 1136.6,418.3 1063.4,450.3 1028.5,466" fill="#d60000" stroke="#d60000" stroke-width="0.6"></polygon>
<ellipse cx="1067" cy="453" rx="5" ry="3" fill="#e80000"></ellipse>
<path d="M1052,472Q1070,470 1084,462Q1080,473 1056,476z" fill="#f00000"></path>
<path d="M1040,480Q1060,477 1082,488" fill="none" stroke="#e40000" stroke-width="2"></path>
<polygon points="1053.5,498.5 1066.7,509 1066.7,523.3 1053.5,512.5" fill="#bc0000" stroke="#bc0000" stroke-width="0.6"></polygon>
<polygon points="1066.7,509 1140.8,477 1140.8,490.5 1066.7,523.3" fill="#d80000" stroke="#d80000" stroke-width="0.6"></polygon>
<polygon points="1139.5,394 1145,370 1146.7,395 1147.2,406.6 1144.3,422.2 1136.6,418.3 1136.6,406.6" fill="#700000" stroke="#700000" stroke-width="0.6"></polygon>
<polygon points="1147.2,406.6 1153,415.4 1163.7,424.1 1173.4,429.9 1187,433.3 1229.7,436.2 1349,443.8 1372,445.4 1372,466.5 1324.8,462.7 1229.7,456.1 1182.1,452.2 1172.4,448.3 1157.9,437.7 1144.3,422.2" fill="#cc0000" stroke="#cc0000" stroke-width="0.6"></polygon>
<polygon points="1108.9,432.3 1136.6,420.2 1144.3,422.2 1157.9,437.7 1172.4,448.3 1182.1,452.2 1229.7,456.1 1324.8,462.7 1368,465.8 1381.7,451.3 1387.5,455.3 1395,468 1457.5,481.7 1457.5,491.7 1445,499.2 1350,493.3 1289.8,490.3 1220,486 1141.4,480.8 1109.4,478.4 1109.4,463.9 1122,462.9 1122.5,440.6 1119.1,438.2 1108.4,437.7" fill="#e50000" stroke="#e50000" stroke-width="0.6"></polygon>
<polygon points="1445,499.2 1457.5,491.7 1457.5,481.7 1449,486 1446,490" fill="#f00000" stroke="#f00000" stroke-width="0.6"></polygon>
<path d="M1145,422.5L1158,437.9L1172.4,448.6L1182,452.4" fill="none" stroke="#ac0000" stroke-width="1.1"></path>
<polygon points="1136,458.5 1138.5,457.6 1157.6,474 1156.4,476.8 1138,475 1136,472.6" fill="#cc0000" stroke="#cc0000" stroke-width="1.6" stroke-linejoin="round"></polygon>
<path d="M1136.3,458L1136.3,473" fill="none" stroke="#9a0000" stroke-width="1.6"></path>
<polygon points="1153,458.6 1184.5,459.6 1172,474.4 1168,474.4" fill="#c80000" stroke="#c80000" stroke-width="1.6" stroke-linejoin="round"></polygon>
<polygon points="1172,459.2 1185,459.6 1172.4,474.8 1170,468" fill="#a00000" stroke="#a00000" stroke-width="0.6"></polygon>
<polygon points="1182,478 1196,463 1199.3,463 1213.4,477.6 1212.6,479.2" fill="#d20000" stroke="#d20000" stroke-width="1.6" stroke-linejoin="round"></polygon>
<polygon points="1208.5,461 1239.4,462 1241,465.6 1228.4,477.6 1224.2,477.6" fill="#c80000" stroke="#c80000" stroke-width="1.6" stroke-linejoin="round"></polygon>
<polygon points="1228,461.8 1239.6,462.2 1241.4,465.8 1228.6,478 1227,470" fill="#960000" stroke="#960000" stroke-width="0.6"></polygon>
<polygon points="1237.4,478.6 1251.3,466.8 1254.6,466.8 1269.2,480.8 1268.4,482.8 1238.4,481.6" fill="#d20000" stroke="#d20000" stroke-width="1.6" stroke-linejoin="round"></polygon>
<polygon points="1264.2,464.8 1295.2,466.2 1296.4,469 1283.6,481 1279.6,481" fill="#c80000" stroke="#c80000" stroke-width="1.6" stroke-linejoin="round"></polygon>
<polygon points="1284,465.8 1295.6,466.4 1296.8,469.2 1284,481.4 1283,474" fill="#960000" stroke="#960000" stroke-width="0.6"></polygon>
<polygon points="1293.4,480.4 1305.8,470.2 1310.8,470.2 1322,484" fill="#d20000" stroke="#d20000" stroke-width="1.6" stroke-linejoin="round"></polygon>
<polygon points="1349,485.6 1364.6,473.8 1367.4,473.8 1381.4,487 1380.4,489.2 1350,488" fill="#d80000" stroke="#d80000" stroke-width="1.6" stroke-linejoin="round"></polygon>
<path d="M1330.6,492V508.5Q1331,511 1334,512.2H1346Q1349.6,511 1350,508.5V492z" fill="#e60000"></path>
<path d="M1340,493V512.2H1346Q1349.6,511 1350,508.5V493z" fill="#d40000"></path>
<polygon points="984.2,326.7 1022.5,355.8 1024.2,407.5 986.2,378.3" fill="#72869a" stroke="#72869a" stroke-width="0.6"></polygon>
<path d="M984.2,326.7L1071,286.3Q1078,283.4 1084,287L1121.5,312.2Q1126,316 1125.8,321L1022.5,355.8z" fill="#8095aa"></path>
<path d="M1079,284.2Q1083,285 1086,288L1122.5,313Q1125.6,316 1125.8,320L1116,314.8L1070,286.8z" fill="url(#bedge)"></path>
<path d="M1022.5,355.8L1114.5,314.6Q1124.5,311 1125.8,321L1126.8,345Q1126.4,358.5 1113.5,366.5L1024.2,407.5z" fill="#879cb1"></path>
<path d="M1387.5,450.8V463.3Q1389,471 1396.7,476.7Q1405,482 1416.7,484.2Q1425,485.5 1433.3,485.3Q1444,485 1453.3,482.5Q1463,479 1468.3,473.3Q1472,468 1472.5,460L1471.7,418.3Q1470,412 1465,408.3L1458.3,404.2L1458,391.7L1401,391.7L1401,420z" fill="url(#mot)"></path>
<path d="M1387.5,450.8Q1392,450.5 1400,449.2Q1416,448.5 1430,446.7Q1445,444 1456.7,438.3Q1466,433 1471.7,425L1471.7,418.3Q1470,412 1465,408.3L1458.3,404.2Q1455,409.5 1450,411.7Q1445,415.5 1438.3,416.7Q1430,418 1423.3,417.5L1400,425z" fill="url(#mot2)"></path>
<path d="M1416,417Q1430,418.5 1438.3,416.7Q1445,415.5 1450,411.7Q1455,409.5 1458.3,404.2L1458.2,399Q1455,405 1448,408Q1438,412.5 1416,411z" fill="#b3ae94"></path>
<path d="M1449,391V407.5Q1455,405 1458.2,399.5L1458,391.7z" fill="#c6c1a6"></path>
<path d="M1417.5,370V361.7Q1447,332 1476.7,304.5Q1500,287 1526.7,275Q1545,267.5 1556,266.4Q1566,266.4 1572,272Q1575,277 1568.3,285L1526.7,330L1493.3,363.3Q1476,380 1463.3,386.7Q1456,390.5 1448.3,388.3L1440,375z" fill="url(#bl2)"></path>
<path d="M1405.8,382.5V397Q1410,408 1428,410.5Q1446,409 1449.2,400V382.5z" fill="#e20000"></path>
<ellipse cx="1427.5" cy="382.8" rx="21.7" ry="12.6" fill="#cc0000"></ellipse>
<path d="M1404,390L1393.3,400L1349,443.8L1289.8,491.8Q1282.5,497 1281.2,499.5Q1281.5,503 1287.9,504.9Q1296,506.4 1300.5,505.4Q1304.5,504.5 1307.3,502.4L1325.7,492.3L1368.3,463.3L1380,453.3L1420,416.7L1436.7,408.3Q1425,406 1414,400z" fill="url(#bl1)"></path>
<path d="M1405.8,389V397Q1410,408 1428,410.5Q1446,409 1449.2,400V392Q1440,401 1428,401Q1412,400 1405.8,389z" fill="#e20000"></path>
</svg>
<!-- VIEWER OVERLAYS -->
<div class="a" style="left:1629px;top:147px;width:250px;height:157px;border:1px solid #b4d8e6;border-radius:4px;background:rgba(247,247,247,0.7)"></div>
<div class="ex" style="left:1642px;top:163px"><i></i></div>
<div class="t" style="left: 1654.3px; top: 157px; font-size: 11.5px; line-height: 18px; color: rgb(92, 157, 186); transform: scaleX(0.853);">Scene</div>
<div class="ex" style="left:1658px;top:182px"><i></i></div>
<div class="t" style="left: 1670.4px; top: 176px; font-size: 11.5px; line-height: 18px; color: rgb(92, 157, 186); transform: scaleX(0.927);">DroneAssembly mesh</div>
<div class="ex" style="left:1674px;top:202px"><i></i><b></b></div>
<svg style="left:1688px;top:202.7px" width="12" height="8" viewBox="0 0 12 8"><path d="M0.2 3.8Q2.8 0.2 6 0.2Q9.2 0.2 11.8 3.8Q9.2 7.5 6 7.5Q2.8 7.5 0.2 3.8z" fill="#7f7f7a"></path><path d="M1.3 3.8L2.7 2.7V4.9zM10.7 3.8L9.3 2.7V4.9z" fill="#d4d4d2"></path><circle cx="6" cy="3.8" r="1.15" fill="#f4f4f4"></circle></svg>
<div class="t" style="left: 1704.2px; top: 196px; font-size: 11.5px; line-height: 18px; color: rgb(92, 157, 186); transform: scaleX(0.926);">volumeOnGeoVolumes_4</div>
<div class="ex" style="left:1674px;top:222px"><i></i><b></b></div>
<svg style="left:1688px;top:222.7px" width="12" height="8" viewBox="0 0 12 8"><path d="M0.2 3.8Q2.8 0.2 6 0.2Q9.2 0.2 11.8 3.8Q9.2 7.5 6 7.5Q2.8 7.5 0.2 3.8z" fill="#7f7f7a"></path><path d="M1.3 3.8L2.7 2.7V4.9zM10.7 3.8L9.3 2.7V4.9z" fill="#d4d4d2"></path><circle cx="6" cy="3.8" r="1.15" fill="#f4f4f4"></circle></svg>
<div class="t" style="left: 1704.2px; top: 216px; font-size: 11.5px; line-height: 18px; color: rgb(228, 106, 51); font-weight: bold; -webkit-text-stroke: 0px; transform: scaleX(0.894);">volumeOnGeoVolumes_0</div>
<div class="ex" style="left:1674px;top:242px"><i></i><b></b></div>
<svg style="left:1688px;top:242.7px" width="12" height="8" viewBox="0 0 12 8"><path d="M0.2 3.8Q2.8 0.2 6 0.2Q9.2 0.2 11.8 3.8Q9.2 7.5 6 7.5Q2.8 7.5 0.2 3.8z" fill="#7f7f7a"></path><path d="M1.3 3.8L2.7 2.7V4.9zM10.7 3.8L9.3 2.7V4.9z" fill="#d4d4d2"></path><circle cx="6" cy="3.8" r="1.15" fill="#f4f4f4"></circle></svg>
<div class="t" style="left: 1704.2px; top: 236px; font-size: 11.5px; line-height: 18px; color: rgb(92, 157, 186); transform: scaleX(0.926);">volumeOnGeoVolumes_2</div>
<div class="ex" style="left:1674px;top:262px"><i></i><b></b></div>
<svg style="left:1688px;top:262.7px" width="12" height="8" viewBox="0 0 12 8"><path d="M0.2 3.8Q2.8 0.2 6 0.2Q9.2 0.2 11.8 3.8Q9.2 7.5 6 7.5Q2.8 7.5 0.2 3.8z" fill="#7f7f7a"></path><path d="M1.3 3.8L2.7 2.7V4.9zM10.7 3.8L9.3 2.7V4.9z" fill="#d4d4d2"></path><circle cx="6" cy="3.8" r="1.15" fill="#f4f4f4"></circle></svg>
<div class="t" style="left: 1704.2px; top: 256px; font-size: 11.5px; line-height: 18px; color: rgb(228, 106, 51); font-weight: bold; -webkit-text-stroke: 0px; transform: scaleX(0.894);">volumeOnGeoVolumes_1</div>
<div class="ex" style="left:1674px;top:282px"><i></i><b></b></div>
<svg style="left:1688px;top:282.7px" width="12" height="8" viewBox="0 0 12 8"><path d="M0.2 3.8Q2.8 0.2 6 0.2Q9.2 0.2 11.8 3.8Q9.2 7.5 6 7.5Q2.8 7.5 0.2 3.8z" fill="#7f7f7a"></path><path d="M1.3 3.8L2.7 2.7V4.9zM10.7 3.8L9.3 2.7V4.9z" fill="#d4d4d2"></path><circle cx="6" cy="3.8" r="1.15" fill="#f4f4f4"></circle></svg>
<div class="t" style="left: 1704.2px; top: 276px; font-size: 11.5px; line-height: 18px; color: rgb(92, 157, 186); transform: scaleX(0.926);">volumeOnGeoVolumes_3</div>
<svg style="left:1869px;top:294px" width="8" height="8" viewBox="0 0 8 8"><path d="M7.5 0.5L0.5 7.5M7.5 4L4 7.5" stroke="#555" stroke-width="0.8"></path></svg>
<svg style="left:840px;top:835px" width="75" height="105" viewBox="840 835 75 105">
<path d="M850.3 909.3L849.4 880" stroke="#3aa83a" stroke-width="1.6"></path><path d="M849.3 874.2L852.6 877.6L849.5 880.8L846.2 877.4z" fill="#3aa83a"></path>
<path d="M850.3 909.3L875.5 897.8" stroke="#cc1414" stroke-width="1.6"></path><ellipse cx="876.6" cy="897.2" rx="2" ry="2.8" fill="#cc1414" transform="rotate(-20 876.6 897.2)"></ellipse>
<path d="M850.3 909.3L873.2 926.2" stroke="#6e6ee8" stroke-width="1.7"></path><path d="M872 924L877.4 923.2L877.4 928.6L873.6 930.2L871.2 927z" fill="#6e6ee8"></path>
</svg>
<div class="t" style="left:851px;top:837.4px;font-size:31px;line-height:31px;font-weight:bold;-webkit-text-stroke:0;font-style:italic;color:#3cb43c;transform:scaleX(0.8);transform-origin:0 0">Y</div>
<div class="t" style="left:884px;top:872px;font-size:25px;line-height:25px;font-weight:bold;-webkit-text-stroke:0;font-style:italic;color:#e41a1a;transform:scaleX(0.9);transform-origin:0 0">X</div>
<div class="t" style="left:883.5px;top:907px;font-size:33px;line-height:33px;font-weight:bold;-webkit-text-stroke:0;font-style:italic;color:#7272f2;transform:scaleX(1.0);transform-origin:0 0">Z</div>
<div class="a" style="left:781px;top:959px;width:200px;height:18px;border:1px solid #c3dbe5;background:#e4e4e4"></div>
<svg style="left:971px;top:967px" width="8" height="8" viewBox="0 0 8 8"><path d="M7.5 0.5L0.5 7.5M7.5 4L4 7.5" stroke="#888" stroke-width="0.8"></path></svg>
<div class="t" style="left:1220px;top:957px;font-size:12px;line-height:18px;color:#444">0</div>
<div class="a" style="left:1240px;top:963px;width:250px;height:2px;background:#3a3a3a"></div>
<div class="t" style="left: 1499.8px; top: 957px; font-size: 12px; line-height: 18px; color: rgb(68, 68, 68); transform: scaleX(0.993);">0.05</div>
<div class="a" style="left:1753px;top:958px;width:137px;height:32px;background:#005f9c;border-radius:3px 3px 0 0;box-shadow:0 0 0 1px rgba(255,244,238,.65)"></div>
<svg style="left:1762px;top:966px" width="26" height="17" viewBox="0 0 26 17"><ellipse cx="12" cy="8" rx="11.5" ry="7.6" fill="#fff"></ellipse><path d="M17 13L24.5 16.6L20 10z" fill="#fff"></path><rect x="6.2" y="4.2" width="11.6" height="7.8" rx="1.2" fill="#005f9c"></rect><rect x="9.6" y="2.9" width="4.8" height="2" fill="#005f9c"></rect><circle cx="12" cy="8.1" r="2.7" fill="#fff"></circle><circle cx="12" cy="8.1" r="1.5" fill="#005f9c"></circle></svg>
<div class="t" style="left: 1796.6px; top: 966px; font-size: 12px; line-height: 18px; color: rgb(255, 255, 255); transform: scaleX(0.985);">Report an issue</div>

</body></html>
